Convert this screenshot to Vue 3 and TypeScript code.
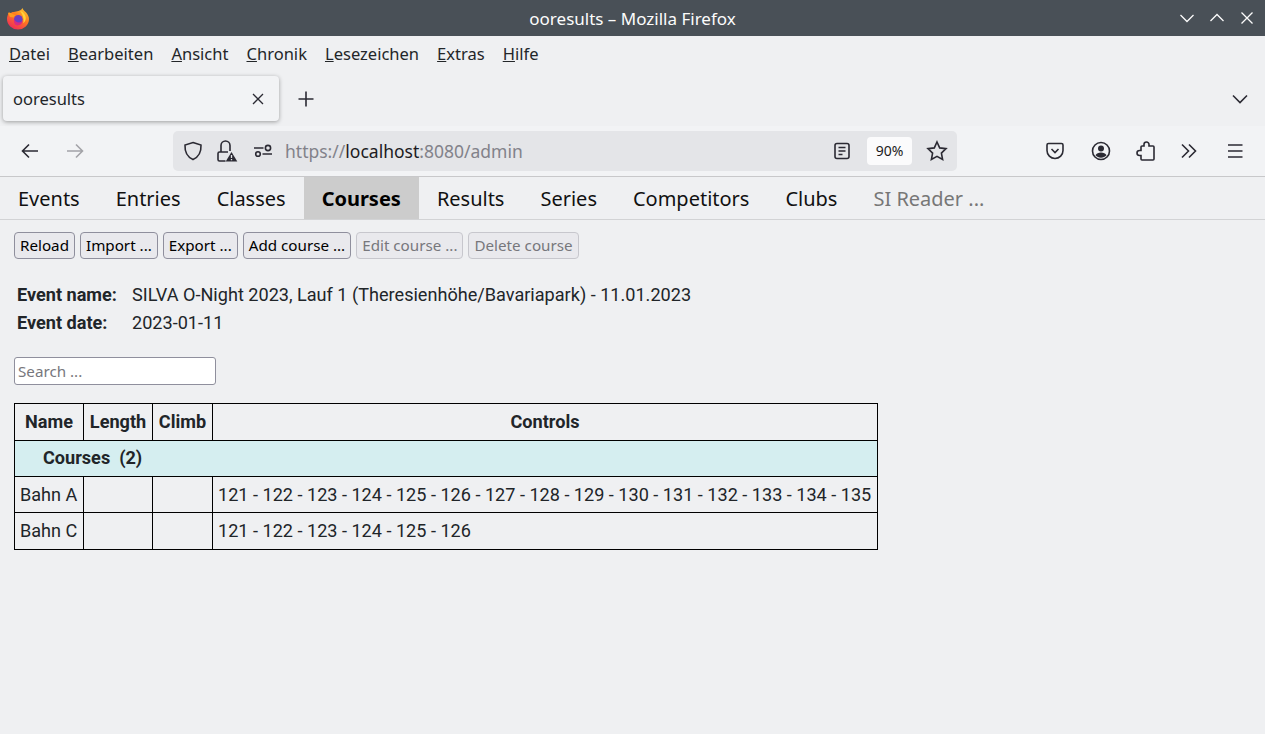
<template>
  <div class="browser">
    <header class="titlebar">
      <svg class="fx-logo" width="24" height="24" viewBox="0 0 24 24">
        <defs>
          <linearGradient id="fxa" x1="0.8" y1="0.05" x2="0.2" y2="1">
            <stop offset="0" stop-color="#ffc02e" />
            <stop offset="0.4" stop-color="#ff7a1f" />
            <stop offset="1" stop-color="#f0245f" />
          </linearGradient>
        </defs>
        <path d="M16.5 2c.6 2.2 2.2 2.800 3.600 4.600 1.700 2 2.900 4.200 2.900 6.400a11 10.500 0 0 1-22 0c0-2 .6-3.800 1.400-5.200l.6-1.800 1 1.400c1-1 2.400-1.600 4-1.500 2.500-.6 6.500-.4 8.500-3.900z" fill="url(#fxa)" />
        <path d="M2 7c1.500-.5 3.500 0 5 1.300L9.500 9 8 11.500 4 11z" fill="#ff9a1f" />
        <path d="M14 5c3 .6 5.800 3.400 5.800 7.200 0 2-1 3.800-2.600 5 1.200-4-.6-9.200-3.200-12.200z" fill="#ffd43a" />
        <circle cx="12.300" cy="13.200" r="4.300" fill="#6b3fc0" />
        <path d="M8 13c1.200 3.800 6.500 4.800 9 1.600-.6 3.200-3 4.900-5.300 4.900-2.600 0-4.400-2.900-3.700-6.500z" fill="#d92a82" />
      </svg>
      <span class="title">ooresults – Mozilla Firefox</span>
      <div class="win-buttons">
        <svg width="16" height="16" viewBox="0 0 16 16"><path d="M1.500 5l6.500 6.500L14.500 5" /></svg>
        <svg width="16" height="16" viewBox="0 0 16 16"><path d="M1.500 11L8 4.500 14.500 11" /></svg>
        <svg width="16" height="16" viewBox="0 0 16 16"><path d="M2.500 2.500l11 11M13.500 2.500l-11 11" /></svg>
      </div>
    </header>

    <nav class="menubar">
      <span v-for="m in menus" :key="m.rest" class="menu-item"><u>{{ m.key }}</u>{{ m.rest }}</span>
    </nav>

    <div class="tabstrip">
      <div class="tab">
        <span>ooresults</span>
        <svg width="12" height="12" viewBox="0 0 12 12" class="icon close"><path d="M1 1l10 10M11 1L1 11" /></svg>
      </div>
      <svg class="newtab icon" width="16" height="16" viewBox="0 0 16 16"><path d="M8 .5v15M.5 8h15" /></svg>
      <svg class="tablist icon" width="16" height="16" viewBox="0 0 16 16"><path d="M1 4.500l7 7 7-7" /></svg>
    </div>

    <div class="navbar">
      <svg class="back icon" width="20" height="20" viewBox="0 0 20 20"><path d="M18 10H2.500M9 3.500L2.500 10 9 16.500" /></svg>
      <svg class="forward icon" width="20" height="20" viewBox="0 0 20 20"><path d="M2 10h15.500M11 3.500l6.500 6.500-6.500 6.500" /></svg>
      <div class="urlbar">
        <svg class="shield icon" width="20" height="20" viewBox="0 0 20 20"><path d="M10 1.500l8 2.600c.3 6.400-1.700 11.600-8 14.400C3.700 15.700 1.700 10.500 2 4.100z" /></svg>
        <svg class="lock icon" width="22" height="22" viewBox="0 0 22 22">
          <path d="M5 12V5.500a4.500 4.500 0 0 1 9 0V11M9.500 21H3.500A1.500 1.500 0 0 1 2 19.500v-6A1.500 1.500 0 0 1 3.500 12H12" />
          <path d="M15.500 12l5.800 9.500H9.700z" class="solid" />
          <path d="M15.500 15v3M15.500 19v1.200" class="notch" />
        </svg>
        <svg class="perm icon" width="20" height="16" viewBox="0 0 20 16">
          <circle cx="15" cy="5" r="2.600" />
          <circle cx="5" cy="11" r="2.300" />
          <path d="M1 5h9.500M9.500 11H19" />
        </svg>
        <span class="url"><span class="dim">https://</span>localhost<span class="dim">:8080/admin</span></span>
        <svg class="reader icon" width="18" height="18" viewBox="0 0 18 18">
          <rect x="2" y="1.500" width="14" height="15" rx="2" />
          <path d="M5.500 5.500h7M5.500 9h7M5.500 12.500h4" />
        </svg>
        <span class="zoom">90%</span>
        <svg class="star icon" width="22" height="22" viewBox="0 0 22 22"><path d="M11 2l2.700 5.900 6.300.8-4.600 4.400 1.200 6.400L11 16.300l-5.600 3.200 1.200-6.400L2 8.700l6.300-.8z" /></svg>
      </div>
      <div class="toolbar">
        <svg class="icon" width="20" height="20" viewBox="0 0 20 20">
          <path d="M3.500 2.500h13A1.500 1.500 0 0 1 18 4v5.500a8 8 0 0 1-16 0V4a1.500 1.500 0 0 1 1.500-1.500z" />
          <path d="M6.500 8l3.500 3.500L13.500 8" />
        </svg>
        <svg class="icon" width="20" height="20" viewBox="0 0 20 20">
          <circle cx="10" cy="10" r="8.500" />
          <circle cx="10" cy="7.500" r="3" class="filled" />
          <path d="M4.500 14.300c1-2 3-2.800 5.500-2.800s4.500.8 5.500 2.800c-1.400 1.500-3.300 2.400-5.500 2.400s-4.100-.9-5.500-2.400z" class="filled" />
        </svg>
        <svg class="icon ext" width="20" height="20" viewBox="0 0 20 20">
          <path d="M8 5V3.500a2.500 2.500 0 0 1 5 0V5h4a1 1 0 0 1 1 1v12a1 1 0 0 1-1 1H6a1 1 0 0 1-1-1v-3.500H3.500a2.500 2.500 0 0 1 0-5H5V6a1 1 0 0 1 1-1z" />
        </svg>
        <svg class="icon" width="20" height="20" viewBox="0 0 20 20"><path d="M3 3.500l6.500 6.500L3 16.500M10 3.500l6.500 6.500-6.500 6.500" /></svg>
        <svg class="icon" width="20" height="20" viewBox="0 0 20 20"><path d="M3 4h14.500M3 10h14.500M3 16h14.500" /></svg>
      </div>
    </div>

    <main class="page">
      <div class="tabs">
        <span v-for="t in tabs" :key="t" class="page-tab" :class="{ active: t === 'Courses', off: t === 'SI Reader ...' }">{{ t }}</span>
      </div>

      <div class="actions">
        <button v-for="b in buttons" :key="b.label" type="button" :disabled="b.disabled">{{ b.label }}</button>
      </div>

      <dl class="event">
        <dt>Event name:</dt>
        <dd>SILVA O-Night 2023, Lauf 1 (Theresienhöhe/Bavariapark) - 11.01.2023</dd>
        <dt>Event date:</dt>
        <dd>2023-01-11</dd>
      </dl>

      <input class="search" type="text" placeholder="Search ..." />

      <table class="courses">
        <thead>
          <tr>
            <th class="c-name">Name</th>
            <th class="c-len">Length</th>
            <th class="c-climb">Climb</th>
            <th>Controls</th>
          </tr>
        </thead>
        <tbody>
          <tr class="group">
            <td colspan="4">Courses&nbsp; (2)</td>
          </tr>
          <tr v-for="c in courses" :key="c.name">
            <td>{{ c.name }}</td>
            <td></td>
            <td></td>
            <td>{{ c.controls.join(' - ') }}</td>
          </tr>
        </tbody>
      </table>
    </main>
  </div>
</template>

<script setup lang="ts">
const menus = [
  { key: "D", rest: "atei" },
  { key: "B", rest: "earbeiten" },
  { key: "A", rest: "nsicht" },
  { key: "C", rest: "hronik" },
  { key: "L", rest: "esezeichen" },
  { key: "E", rest: "xtras" },
  { key: "H", rest: "ilfe" },
];

const tabs = ["Events", "Entries", "Classes", "Courses", "Results", "Series", "Competitors", "Clubs", "SI Reader ..."];

const buttons = [
  { label: "Reload", disabled: false },
  { label: "Import ...", disabled: false },
  { label: "Export ...", disabled: false },
  { label: "Add course ...", disabled: false },
  { label: "Edit course ...", disabled: true },
  { label: "Delete course", disabled: true },
];

const courses = [
  { name: "Bahn A", controls: [121, 122, 123, 124, 125, 126, 127, 128, 129, 130, 131, 132, 133, 134, 135] },
  { name: "Bahn C", controls: [121, 122, 123, 124, 125, 126] },
];
</script>

<style>
html,
body {
  margin: 0;
  background: #eff0f2;
}
</style>

<style scoped>
.browser {
  height: 734px;
  overflow: hidden;
  background: #eff0f2;
  color: #1c1b22;
  font-family: "Noto Sans", sans-serif;
}

.titlebar {
  position: relative;
  display: flex;
  align-items: center;
  justify-content: center;
  height: 36px;
  background: #495057;
  color: #fcfcfc;
  font-size: 17px;
}

.fx-logo {
  position: absolute;
  left: 6px;
  top: 6px;
}

.win-buttons {
  position: absolute;
  right: 10px;
  top: 10px;
  display: flex;
  gap: 14px;
}

.win-buttons svg {
  fill: none;
  stroke: #fcfcfc;
  stroke-width: 1.300;
}

.menubar {
  display: flex;
  align-items: center;
  gap: 18px;
  box-sizing: border-box;
  height: 36px;
  padding: 0 0 2px 9px;
  font-size: 16.550px;
  color: #232629;
}

.icon {
  flex: none;
  fill: none;
  stroke: #2b2a33;
  stroke-width: 1.600;
}

.icon .solid,
.icon .filled {
  fill: #2b2a33;
  stroke: none;
}

.icon .notch {
  stroke: #e4e5e8;
  stroke-width: 1.300;
}

.tabstrip {
  display: flex;
  align-items: center;
  height: 54px;
  padding: 4px 17px 5px 3px;
  box-sizing: border-box;
}

.tab {
  display: flex;
  align-items: center;
  justify-content: space-between;
  box-sizing: border-box;
  width: 276px;
  height: 45px;
  padding: 0 15px 0 10px;
  border-radius: 4px;
  background: #f2f3f5;
  box-shadow: 0 1px 4px rgba(0, 0, 0, 0.35);
  font-size: 16.500px;
  color: #232629;
}

.close {
  stroke-width: 1.300;
}

.newtab {
  margin-left: 19px;
}

.tablist {
  margin-left: auto;
}

.navbar {
  display: flex;
  align-items: center;
  box-sizing: border-box;
  height: 51px;
  padding: 0 20px 1px 20px;
  background: #f2f3f5;
  border-bottom: 1px solid #c8c8ca;
}

.forward {
  margin-left: 25px;
  stroke: #a3a3a8;
}

.urlbar {
  display: flex;
  align-items: center;
  box-sizing: border-box;
  width: 784px;
  height: 40px;
  margin-left: 88px;
  padding: 0 9px 0 10px;
  border-radius: 5px;
  background: #e4e5e8;
}

.lock {
  margin-left: 13px;
}

.perm {
  margin-left: 15px;
}

.url {
  margin-left: 12px;
  flex: 1;
  font-size: 17.500px;
  color: #1c1b22;
}

.dim {
  color: #82828a;
}

.zoom {
  box-sizing: border-box;
  width: 45px;
  height: 28px;
  margin: 0 14px 0 16px;
  border-radius: 4px;
  background: #fbfbfc;
  font-size: 14px;
  line-height: 28px;
  text-align: center;
}

.toolbar {
  display: flex;
  align-items: center;
  gap: 26px;
  margin-left: auto;
}

.ext {
  margin: 0 -3px 0 -1px;
}

.tabs {
  display: flex;
  height: 42px;
  border-bottom: 1px solid #d2d3d5;
}

.page-tab {
  padding: 0 18px;
  font-size: 19.990px;
  line-height: 44px;
  color: #111;
}

.page-tab.active {
  background: #cccccc;
  font-weight: 700;
  color: #000;
}

.page-tab.off {
  color: #777;
}

.actions {
  display: flex;
  gap: 5px;
  padding: 12px 14px 0;
}

button {
  height: 27px;
  padding: 0 5px 2px;
  border: 1px solid #8f8f9d;
  border-radius: 4px;
  background: #e9e9ed;
  color: #000;
  font: 15.200px "Noto Sans", sans-serif;
}

button:disabled {
  border-color: #c7c7cd;
  color: #77777c;
}

.event {
  display: grid;
  grid-template-columns: 115px 1fr;
  row-gap: 6px;
  margin: 25px 0 0 17px;
  font: 18.100px/22px Roboto, sans-serif;
  color: #212529;
}

dt {
  font-weight: 700;
}

dd {
  margin: 0;
}

.search {
  display: block;
  box-sizing: border-box;
  width: 202px;
  height: 28px;
  margin: 23px 0 0 14px;
  padding: 0 3px;
  border: 1px solid #8f8f9d;
  border-radius: 3px;
  background: #fff;
  font: 15.200px "Noto Sans", sans-serif;
}

.search::placeholder {
  color: #77777c;
  opacity: 1;
}

.courses {
  width: 864px;
  margin: 18px 0 0 14px;
  border-collapse: collapse;
  font: 18.100px/22px Roboto, sans-serif;
  color: #212529;
}

.courses th,
.courses td {
  height: 36px;
  box-sizing: border-box;
  padding: 0 5px;
  border: 1px solid #000;
  white-space: nowrap;
}

.courses th,
.courses tbody tr:last-child td {
  height: 37px;
}

.c-name,
.c-len {
  width: 69px;
}

.c-climb {
  width: 60px;
}

.group td {
  padding: 0 5px 2px 28px;
  background: #d5eef0;
  font-weight: 700;
}
</style>
